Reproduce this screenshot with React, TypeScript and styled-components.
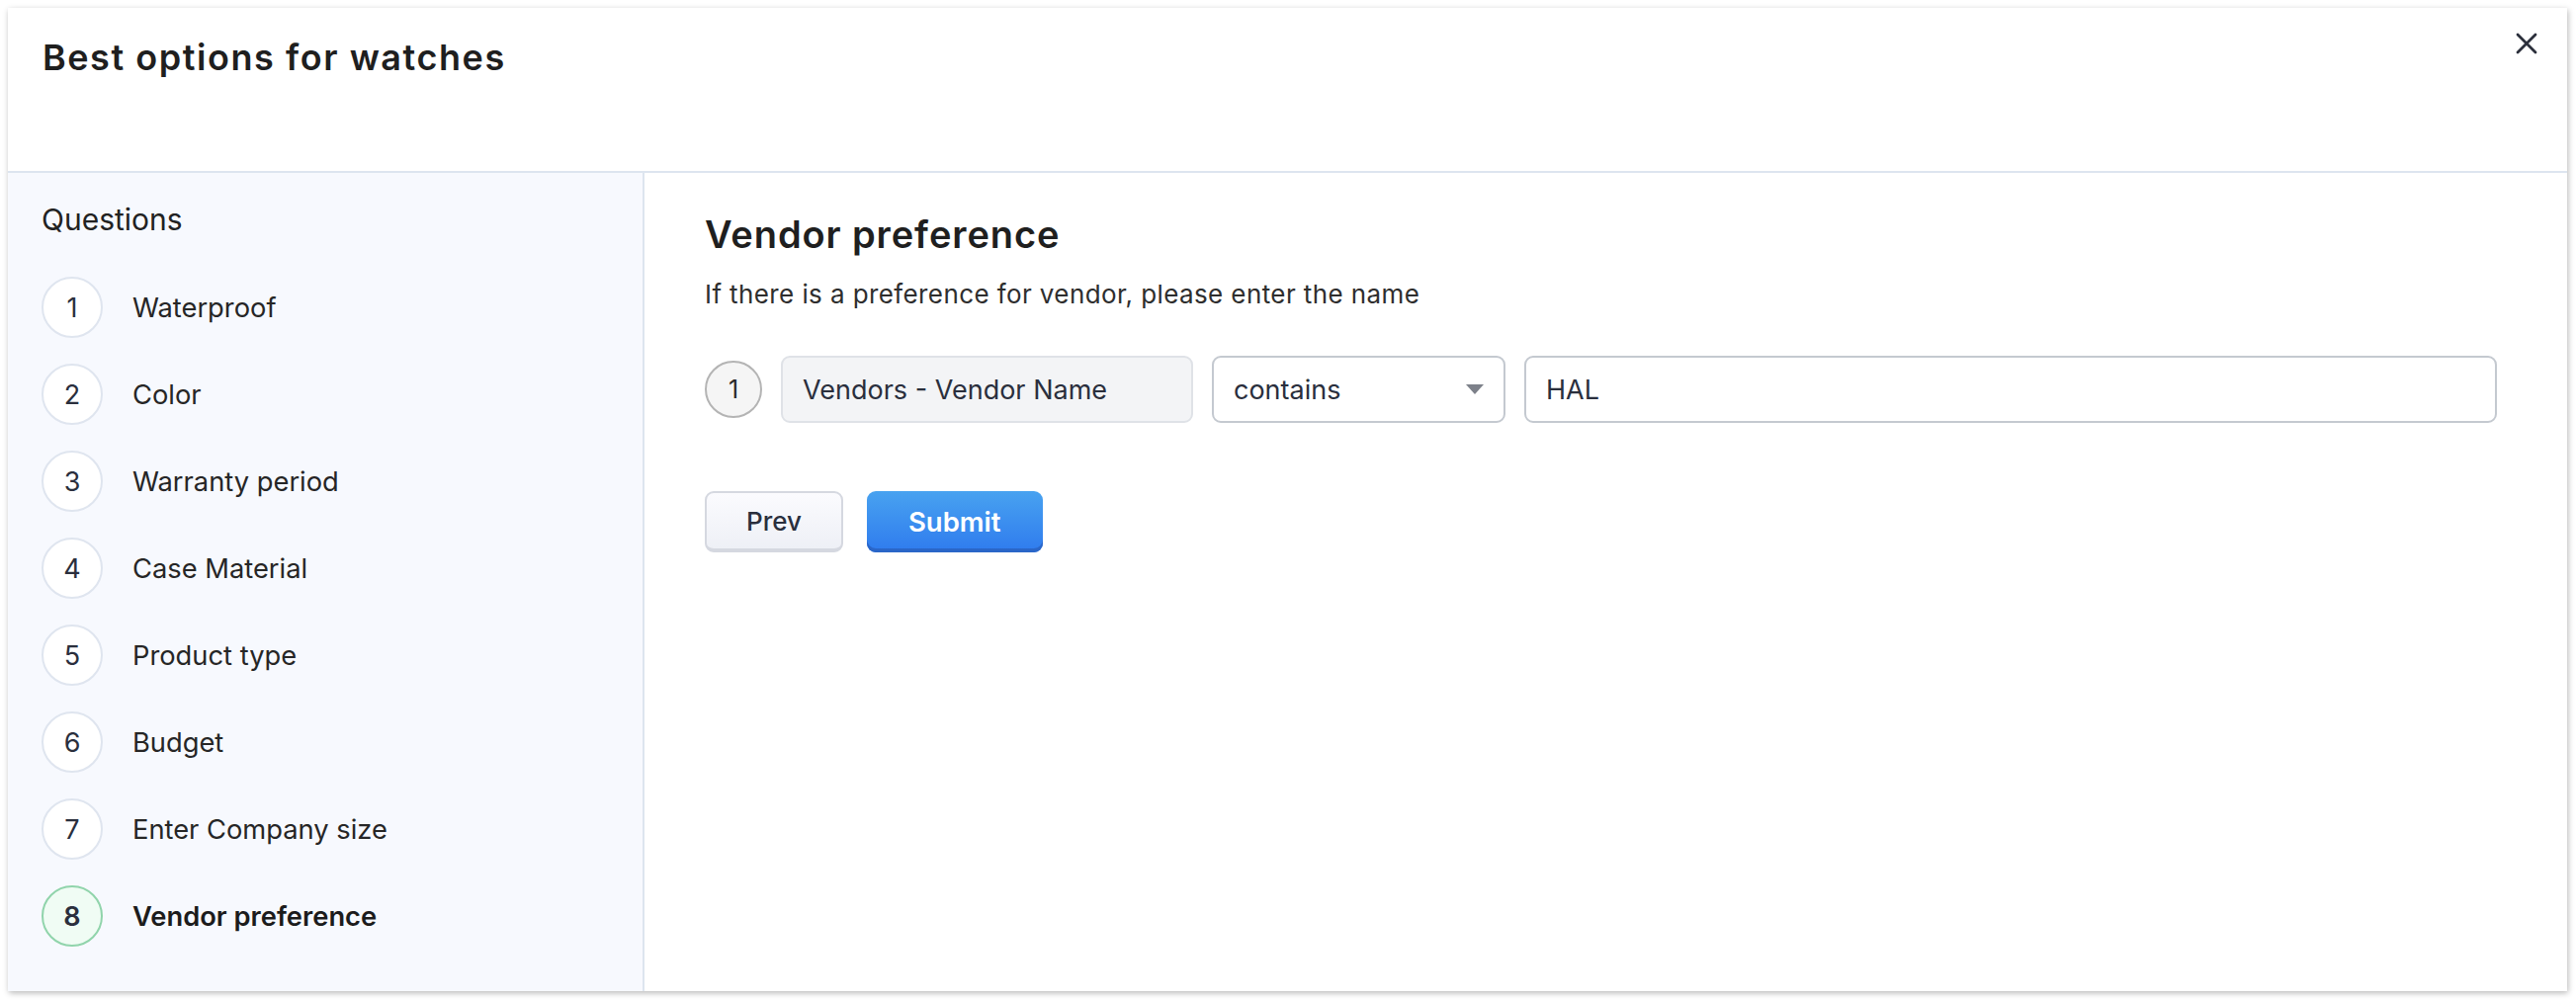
import React from "react";
import styled, { createGlobalStyle } from "styled-components";

const GlobalStyle = createGlobalStyle`
  html, body {
    margin: 0;
    padding: 0;
    background: #ffffff;
  }
  body {
    font-family: Inter, "Noto Sans", "Liberation Sans", sans-serif;
    color: #222222;
  }
`;

const Page = styled.div`
  padding: 8px 9px 9px 8px;
  height: 1012px;
  box-sizing: border-box;
`;

const Modal = styled.div`
  height: 100%;
  display: flex;
  flex-direction: column;
  background: #ffffff;
  box-shadow: 1px 2px 6px rgba(0, 0, 0, 0.28);
`;

const Header = styled.header`
  height: 167px;
  box-sizing: border-box;
  border-bottom: 2px solid #dde5ef;
  display: flex;
  justify-content: space-between;
  align-items: flex-start;
  padding: 28px 29px 0 35px;
`;

const Title = styled.h1`
  margin: 0;
  font-size: 36px;
  font-weight: 600;
  line-height: 44px;
  color: #1f1f1f;
  letter-spacing: 1.55px;
`;

const CloseButton = styled.button`
  border: 0;
  background: transparent;
  padding: 0;
  margin-top: -4px;
  width: 24px;
  height: 24px;
  color: #2b2f3b;
  cursor: pointer;
`;

const Body = styled.div`
  flex: 1;
  display: flex;
  min-height: 0;
`;

const Sidebar = styled.aside`
  width: 644px;
  box-sizing: border-box;
  background: #f7f9fe;
  border-right: 2px solid #dde5ef;
  padding: 29px 0 0 34px;
`;

const SidebarTitle = styled.div`
  font-size: 30px;
  line-height: 36px;
  color: #222222;
  margin-bottom: 40px;
`;

const StepList = styled.ol`
  list-style: none;
  margin: 0;
  padding: 0;
  display: flex;
  flex-direction: column;
  gap: 26px;
`;

const Step = styled.li`
  display: flex;
  align-items: center;
  gap: 30px;
`;

const StepNumber = styled.span<{ $active?: boolean }>`
  width: 62px;
  height: 62px;
  box-sizing: border-box;
  border-radius: 50%;
  border: 2px solid ${(p) => (p.$active ? "#90d4ab" : "#dfe5ef")};
  background: ${(p) => (p.$active ? "#f0fcf4" : "#ffffff")};
  display: flex;
  align-items: center;
  justify-content: center;
  font-size: 27px;
  font-weight: ${(p) => (p.$active ? 600 : 400)};
  color: #2a2f3d;
`;

const StepLabel = styled.span<{ $active?: boolean }>`
  font-size: 27.3px;
  font-weight: ${(p) => (p.$active ? 600 : 400)};
  color: ${(p) => (p.$active ? "#1c1c1c" : "#262626")};
`;

const Content = styled.main`
  flex: 1;
  padding: 38px 71px 0 61px;
`;

const Heading = styled.h2`
  margin: 0;
  font-size: 38px;
  font-weight: 600;
  line-height: 48px;
  color: #1f1f1f;
  letter-spacing: 0.9px;
`;

const Hint = styled.p`
  margin: 20px 0 0;
  font-size: 26px;
  line-height: 34px;
  color: #2e2e2e;
  letter-spacing: 0.4px;
`;

const CriteriaRow = styled.div`
  margin-top: 45px;
  display: flex;
  align-items: center;
  gap: 19px;
`;

const RowIndex = styled.span`
  width: 58px;
  height: 58px;
  flex: none;
  box-sizing: border-box;
  border-radius: 50%;
  border: 2px solid #b4b4b4;
  background: #f5f5f5;
  display: flex;
  align-items: center;
  justify-content: center;
  font-size: 25px;
  color: #2a2a2a;
`;

const Field = styled.div<{ $width?: number; $muted?: boolean }>`
  height: 68px;
  box-sizing: border-box;
  ${(p) => (p.$width ? `width: ${p.$width}px; flex: none;` : "flex: 1;")}
  border-radius: 9px;
  border: 2px solid ${(p) => (p.$muted ? "#dfe2e7" : "#c4c9d0")};
  background: ${(p) => (p.$muted ? "#f3f4f6" : "#ffffff")};
  display: flex;
  align-items: center;
  justify-content: space-between;
  padding: 0 20px;
  font-size: 27px;
  color: #2a2f3d;
`;

const Caret = styled.span`
  width: 0;
  height: 0;
  border-left: 9px solid transparent;
  border-right: 9px solid transparent;
  border-top: 10px solid #7d818a;
`;

const Actions = styled.div`
  margin-top: 69px;
  display: flex;
  gap: 24px;
`;

const Button = styled.button<{ $primary?: boolean }>`
  height: 62px;
  box-sizing: border-box;
  padding: 0 ${(p) => (p.$primary ? 42 : 40)}px;
  border-radius: 9px;
  font-family: inherit;
  font-size: ${(p) => (p.$primary ? 27.5 : 26)}px;
  font-weight: ${(p) => (p.$primary ? 600 : 500)};
  cursor: pointer;
  ${(p) =>
    p.$primary
      ? `
    color: #ffffff;
    border: 0;
    background: linear-gradient(#48a2f0, #2f7bee);
    box-shadow: inset 0 -4px 0 #2a66c8;
  `
      : `
    color: #2a2f3d;
    border: 2px solid #d5d8e0;
    border-bottom-width: 4px;
    background: linear-gradient(#fbfbfe, #eef0f6);
  `}
`;

const steps = [
  "Waterproof",
  "Color",
  "Warranty period",
  "Case Material",
  "Product type",
  "Budget",
  "Enter Company size",
  "Vendor preference",
];

export default function App() {
  const current = 8;
  return (
    <>
      <GlobalStyle />
      <Page>
        <Modal>
          <Header>
            <Title>Best options for watches</Title>
            <CloseButton aria-label="Close">
              <svg width="24" height="24" viewBox="0 0 24 24" fill="none">
                <path d="M3 3L21 21M21 3L3 21" stroke="currentColor" strokeWidth="2.8" strokeLinecap="round" />
              </svg>
            </CloseButton>
          </Header>
          <Body>
            <Sidebar>
              <SidebarTitle>Questions</SidebarTitle>
              <StepList>
                {steps.map((label, i) => (
                  <Step key={label}>
                    <StepNumber $active={i + 1 === current}>{i + 1}</StepNumber>
                    <StepLabel $active={i + 1 === current}>{label}</StepLabel>
                  </Step>
                ))}
              </StepList>
            </Sidebar>
            <Content>
              <Heading>Vendor preference</Heading>
              <Hint>If there is a preference for vendor, please enter the name</Hint>
              <CriteriaRow>
                <RowIndex>1</RowIndex>
                <Field $width={417} $muted>Vendors - Vendor Name</Field>
                <Field $width={297}>
                  contains
                  <Caret />
                </Field>
                <Field>HAL</Field>
              </CriteriaRow>
              <Actions>
                <Button>Prev</Button>
                <Button $primary>Submit</Button>
              </Actions>
            </Content>
          </Body>
        </Modal>
      </Page>
    </>
  );
}
